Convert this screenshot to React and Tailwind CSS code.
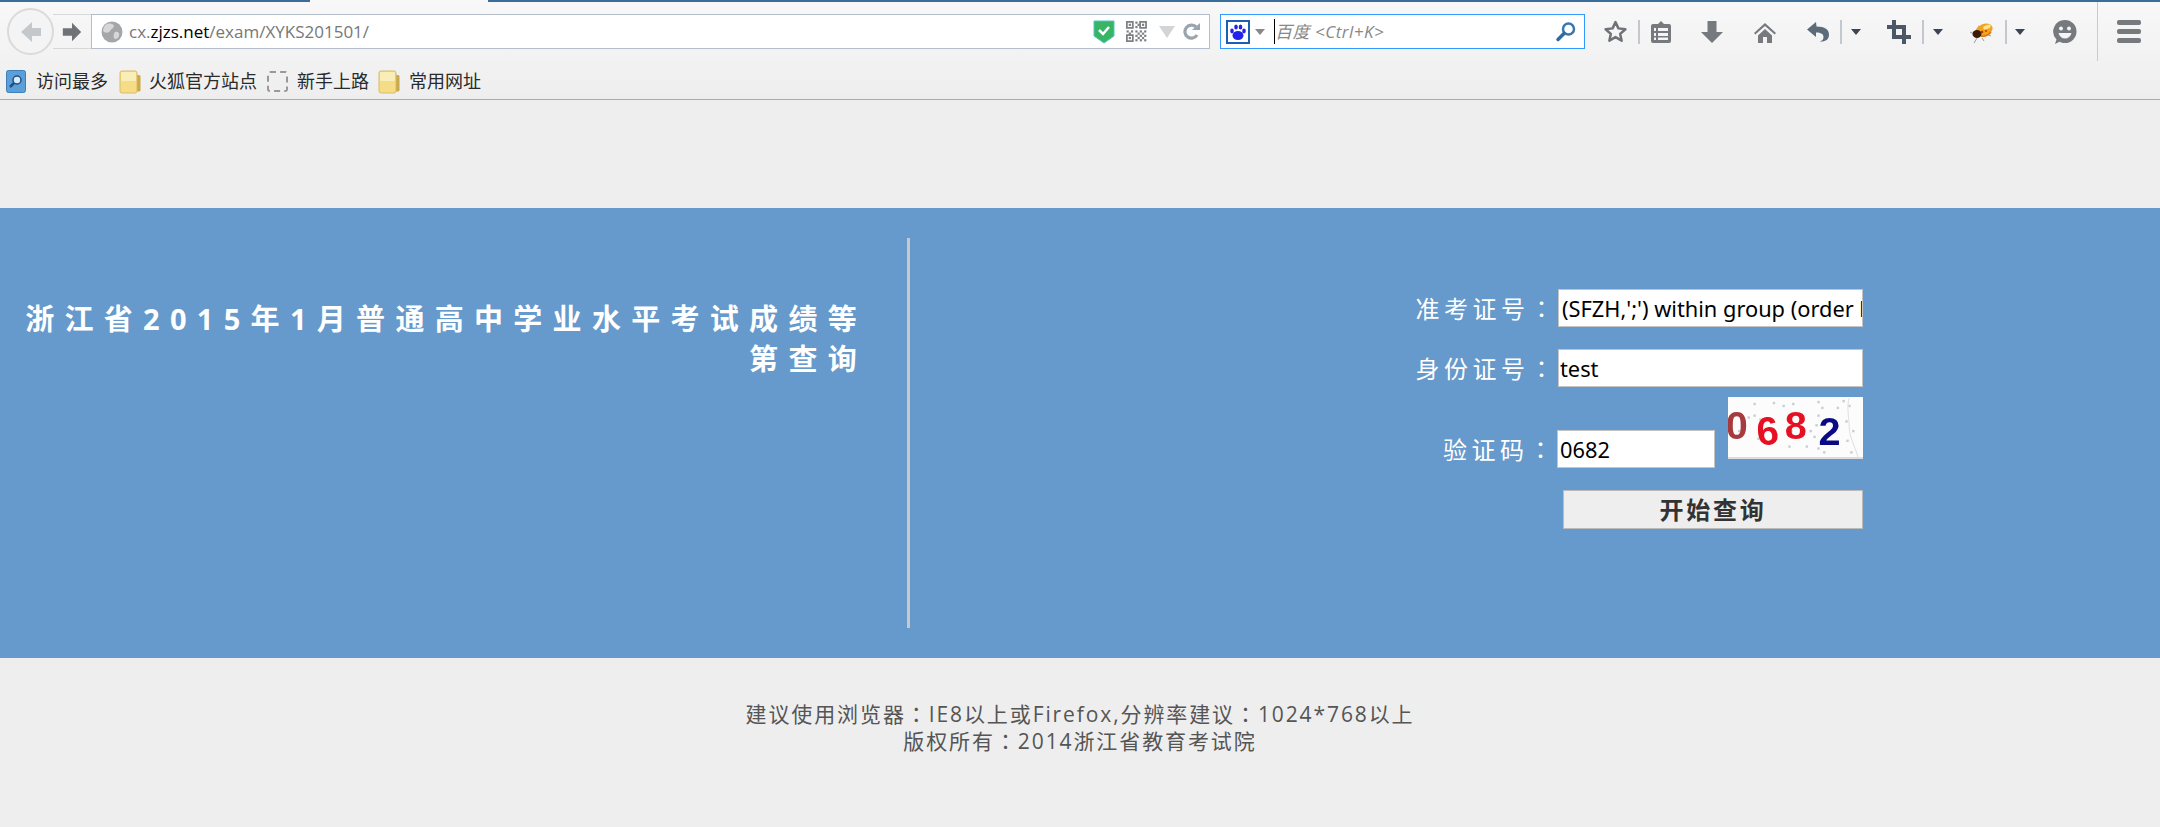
const cjk = 'font-["Open_Sans","Noto_Sans_CJK_SC",sans-serif]';

function Colon() {
  return <span className='font-["Noto_Sans_CJK_TC",sans-serif]'>：</span>;
}

function Drop({ color = "#3b4654", className = "" }) {
  return (
    <svg width="12" height="8" viewBox="0 0 12 8" className={className}>
      <path d="M1 1h10L6 7z" fill={color} />
    </svg>
  );
}

function Sep() {
  return <div className="w-[2px] h-[24px] bg-[#c3c8cf]" />;
}

function Folder() {
  return (
    <svg width="22" height="24" viewBox="0 0 22 24">
      <path d="M18 5h2a1.5 1.5 0 0 1 1.500 1.500V20a1.500 1.500 0 0 1-1.500 1.500h-2z" fill="#c9a94a" />
      <rect x="1" y="1" width="17" height="22" rx="2" fill="#f5dc87" stroke="#d8bd62" />
      <rect x="2" y="2" width="15" height="9" rx="1" fill="#faeeb8" />
    </svg>
  );
}

function Bookmark({ icon, label, className = "" }) {
  return (
    <div className={`flex items-center ${className}`}>
      {icon}
      <span className="text-[18px] text-[#2a2a2a]">{label}</span>
    </div>
  );
}

function Qr() {
  const cells = [[9,1],[11,3],[9,5],[1,9],[3,11],[5,9],[9,9],[11,11],[13,9],[15,11],[9,13],[13,13],[17,13],[11,15],[15,15],[9,17],[13,17],[17,17],[17,9]];
  const finder = [[0,0],[12,0],[0,12]];
  return (
    <svg width="22" height="22" viewBox="0 0 20 20">
      {finder.map(([x, y]) => (
        <path key={`${x}${y}`} fillRule="evenodd" fill="#7d8084" d={`M${x} ${y}h7v7h-7zM${x + 1.6} ${y + 1.6}v3.800h3.800v-3.800z`} />
      ))}
      {finder.map(([x, y]) => (
        <rect key={`c${x}${y}`} x={x + 2.5} y={y + 2.5} width="2" height="2" fill="#7d8084" />
      ))}
      {cells.map(([x, y]) => (
        <rect key={`${x}-${y}`} x={x - 0.5} y={y - 0.5} width="2" height="2" fill="#7d8084" />
      ))}
    </svg>
  );
}

function Bug() {
  return (
    <svg width="26" height="24" viewBox="0 0 26 24">
      <g stroke="#777" strokeWidth="0.700" fill="none">
        <path d="M7 15 1 12M8 18l-3 5M13 18l2 3M17 14l5 2M12 8 9 6" />
      </g>
      <ellipse cx="15" cy="10" rx="9" ry="6" fill="#f3a21f" transform="rotate(-22 15 10)" />
      <ellipse cx="18" cy="7" rx="4" ry="2" fill="#fbe28a" transform="rotate(-22 18 7)" />
      <ellipse cx="8" cy="14" rx="4.500" ry="4" fill="#3a1c08" />
      <circle cx="13" cy="12" r="1.300" fill="#a33c08" />
      <circle cx="17" cy="11" r="1.100" fill="#b84a08" />
      <path d="M12 16q6 1 10-4" stroke="#d9700f" strokeWidth="1.500" fill="none" />
    </svg>
  );
}

function Captcha() {
  const dots = [[24,6],[44,5],[24,18],[18,20],[30,22],[8,34],[54,8],[64,6],[90,4],[110,10],[116,3],[122,8],[119,24],[90,18],[88,28],[62,34],[82,34],[86,40],[78,50],[90,52],[96,56],[126,34],[120,44],[124,56],[28,42],[60,50],[94,10]];
  return (
    <svg width="135" height="62" viewBox="0 0 135 62" className="block shrink-0 bg-[#fcfcfc] border-b-2 border-[#dcdcdc] blur-[0.4px]">
      {dots.map(([x, y]) => (
        <rect key={`${x}-${y}`} x={x} y={y} width="2.500" height="2.500" fill="#c9cfd0" />
      ))}
      <path d="M123 1c-3 8 0 22 0 30 0 10 6 20 9 31" stroke="#ddd" strokeWidth="1" fill="none" />
      <g fontFamily="'Liberation Sans',sans-serif" fontWeight="700" fontSize="41" textAnchor="middle">
        <text x="9" y="43" fill="#a53a3f">0</text>
        <text x="41" y="49" fill="#e51021" transform="rotate(-6 41 35)">6</text>
        <text x="70" y="43" fill="#e51021">8</text>
        <text x="105" y="50" fill="#0a0a86">2</text>
      </g>
    </svg>
  );
}

function Field({ value, className = "" }) {
  return (
    <input
      readOnly
      value={value}
      className={`h-[38px] bg-white border border-[#c4c4c4] text-black text-[21.800px] outline-none tracking-normal font-["Noto_Sans",sans-serif] ${className}`}
    />
  );
}

export default function App() {
  return (
    <div className={`min-h-[827px] bg-[#eeeeee] ${cjk}`}>
      {/* browser chrome */}
      <header className="h-[100px] border-b border-[#aaaaaa] bg-gradient-to-b from-[#f8f8f8] to-[#eeeeee]">
        <div className="h-[2px] flex">
          <div className="w-[310px] bg-[#3a6d99]" />
          <div className="w-[178px] bg-[#f8f8f8]" />
          <div className="flex-1 bg-[#3a6d99]" />
        </div>
        <div className="h-[59px] flex items-center relative">
          <div className="ml-[7px] w-[47px] h-[47px] rounded-full border-2 border-[#dadada] bg-[#f4f4f4] flex items-center justify-center z-10">
            <svg width="24" height="24" viewBox="0 0 24 24"><path d="M22 8h-9V2L2 12l11 10v-6h9z" fill="#c5c8ca" /></svg>
          </div>
          <div className="w-[38px] h-[35px] -ml-px border-y border-[#d8d8d8] flex items-center justify-center">
            <svg width="22" height="22" viewBox="0 0 24 24"><path d="M2 8h10V2l10 10-10 10v-6H2z" fill="#6f7377" /></svg>
          </div>
          <div className="w-[1119px] h-[35px] bg-white border border-[#b4bdca] flex items-center text-[17px] font-['Open_Sans',sans-serif]">
            <svg width="22" height="22" viewBox="0 0 22 22" className="ml-[9px] mr-[6px]">
              <circle cx="11" cy="11" r="10.500" fill="#a4a6a8" />
              <path d="M6 3c3-1 7 0 7 2s-3 3-4 5-4 2-6 1 0-7 3-8zM14 11c3-1 5 1 4 4s-4 4-5 2 0-5 1-6z" fill="#d6d7d8" />
            </svg>
            <span className="text-[#777]">cx.</span>
            <span className="text-black">zjzs.net</span>
            <span className="text-[#777]">/exam/XYKS201501/</span>
            <div className="ml-auto flex items-center">
              <svg width="22" height="24" viewBox="0 0 22 24">
                <path d="M1 1h20v15l-10 7L1 16z" fill="#37b565" stroke="#55c3c8" />
                <path d="m6 10 4 4 6-7" stroke="#fff" strokeWidth="2.500" fill="none" />
              </svg>
              <div className="ml-[11px]"><Qr /></div>
              <svg width="16" height="12" viewBox="0 0 16 12" className="ml-[11px]"><path d="M0 0h16L8 12z" fill="#d2d5d8" /></svg>
              <svg width="18" height="18" viewBox="0 0 18 18" className="ml-[8px] mr-[8px]">
                <path d="M14 12a6.500 6.500 0 1 1-1-8" stroke="#9ba4ad" strokeWidth="3.200" fill="none" />
                <path d="M9 7h8V0z" fill="#9ba4ad" />
              </svg>
            </div>
          </div>
          <div className="w-[365px] h-[35px] ml-[10px] bg-white border border-[#3399ff] flex items-center">
            <div className="ml-[5px] w-[24px] h-[24px] border-2 border-[#1a5fb0] bg-white flex items-center justify-center">
              <svg width="18" height="18" viewBox="0 0 18 18" fill="#2222e8">
                <ellipse cx="9" cy="12.500" rx="5.500" ry="4.500" />
                <ellipse cx="3" cy="8" rx="1.800" ry="2.400" />
                <ellipse cx="7" cy="4" rx="1.800" ry="2.600" />
                <ellipse cx="11.500" cy="4" rx="1.800" ry="2.600" />
                <ellipse cx="15" cy="8" rx="1.800" ry="2.400" />
              </svg>
            </div>
            <Drop color="#888" className="ml-[4px]" />
            <div className="ml-[8px] w-[1px] h-[25px] bg-black" />
            <span className="italic text-[#888] text-[17px] tracking-[0.500px]">百度 &lt;Ctrl+K&gt;</span>
            <svg width="22" height="22" viewBox="0 0 22 22" className="ml-auto mr-[7px]">
              <circle cx="13.500" cy="8" r="5.500" stroke="#3a76ad" strokeWidth="2.500" fill="none" />
              <path d="M9 12.500 3 18.500" stroke="#2e6ba0" strokeWidth="3.500" strokeLinecap="round" />
            </svg>
          </div>
          {/* toolbar icons */}
          <div className="flex-1 flex items-center">
            <div className="w-[53px] flex justify-center pl-[7px]">
              <svg width="25" height="25" viewBox="0 0 24 24"><path d="m12 3 2.800 6 6.700.8-5 4.500 1.400 6.500-5.900-3.400-5.900 3.400 1.400-6.500-5-4.500 6.700-.8z" fill="none" stroke="#6f7377" strokeWidth="2.400" strokeLinejoin="round" /></svg>
            </div>
            <Sep />
            <div className="w-[42px] flex justify-center">
              <svg width="22" height="24" viewBox="0 0 22 24">
                <path fillRule="evenodd" fill="#76797d" d="M3 4h5l3-3 3 3h5a2 2 0 0 1 2 2v15a2 2 0 0 1-2 2H3a2 2 0 0 1-2-2V6a2 2 0 0 1 2-2zm1 4v3h2V8zm4 0v3h10V8zm-4 5v3h2v-3zm4 0v3h10v-3zm-4 4.500V20h2v-2.500zm4 0V20h10v-2.500z" />
              </svg>
            </div>
            <div className="w-[60px] flex justify-center">
              <svg width="24" height="24" viewBox="0 0 24 24"><path d="M7.500 1h9v11H23L12 23 1 12h6.500z" fill="#76797d" /></svg>
            </div>
            <div className="w-[46px] flex justify-center">
              <svg width="24" height="24" viewBox="0 0 24 24" fill="#76797d"><path d="M12 3 1 13l1.300 1.500L12 6l9.700 8.500L23 13z" /><path d="M5 15.500 12 9l7 6.500V23h-5v-6h-4v6H5z" /></svg>
            </div>
            <div className="w-[52px] flex justify-center pl-[7px]">
              <svg width="24" height="24" viewBox="0 0 24 24"><path d="M10 2 1 9.500l9 7.500v-4.500c5 0 7.500 1.500 7.500 4.500s-2 4-4 4.500h2c4 0 7.500-2 7.500-7s-4-8-12.500-8z" fill="#5d6a78" /></svg>
            </div>
            <Sep />
            <div className="w-[28px] flex justify-center"><Drop /></div>
            <div className="w-[52px] flex justify-center pl-[6px]">
              <svg width="24" height="24" viewBox="0 0 24 24"><path d="M5 0h4v5h10v10h5v4h-5v5h-4v-5H5V9H0V5h5zm4 9v6h6V9z" fill="#4c5866" fillRule="evenodd" /></svg>
            </div>
            <Sep />
            <div className="w-[28px] flex justify-center"><Drop /></div>
            <div className="w-[53px] flex justify-center pl-[7px]"><Bug /></div>
            <Sep />
            <div className="w-[26px] flex justify-center"><Drop /></div>
            <div className="w-[64px] flex justify-center">
              <svg width="26" height="26" viewBox="0 0 26 26">
                <path fillRule="evenodd" fill="#76797d" d="M13 1a11.500 11.500 0 0 1 0 23c-2 0-4-.5-5.500-1.300L3 25l1.500-4.500A11.500 11.500 0 0 1 13 1zM9 7.500a2 2 0 1 0 0 4 2 2 0 0 0 0-4zm8 0a2 2 0 1 0 0 4 2 2 0 0 0 0-4zM6.500 14c.8 3.500 3.300 5.500 6.500 5.500s5.700-2 6.500-5.500z" />
              </svg>
            </div>
            <div className="w-[1px] h-[59px] bg-[#c8ccd0]" />
            <div className="flex-1 flex justify-center">
              <div className="w-[24px] flex flex-col gap-[4px]">
                <div className="h-[5px] rounded-[2px] bg-[#76797d]" />
                <div className="h-[5px] rounded-[2px] bg-[#76797d]" />
                <div className="h-[5px] rounded-[2px] bg-[#76797d]" />
              </div>
            </div>
          </div>
        </div>
        <div className="h-[38px] pt-[3px] flex items-center pl-[6px]">
          <Bookmark
            label="访问最多"
            icon={
              <svg width="20" height="23" viewBox="0 0 20 23" className="mr-[10px]">
                <rect x="0.500" y="0.500" width="19" height="22" rx="2" fill="#5c9fd8" stroke="#3d7fb8" />
                <circle cx="11" cy="10" r="4" fill="#d7ecfb" stroke="#1c4f86" strokeWidth="1.500" />
                <path d="M8 13 4 17" stroke="#1c4f86" strokeWidth="2.500" />
              </svg>
            }
          />
          <Bookmark className="ml-[11px]" label="火狐官方站点" icon={<div className="mr-[8px]"><Folder /></div>} />
          <Bookmark
            className="ml-[10px]"
            label="新手上路"
            icon={<div className="w-[21px] h-[21px] mr-[9px] border-2 border-dashed border-[#999] rounded-[3px]" />}
          />
          <Bookmark className="ml-[9px]" label="常用网址" icon={<div className="mr-[9px]"><Folder /></div>} />
        </div>
      </header>

      <div className="h-[108px]" />

      {/* band */}
      <section className="h-[450px] bg-[#6699cc] flex">
        <div className="w-[907px] pt-[91px] pl-[20px] pr-[40px] text-right">
          <h1 className="text-[29px] leading-[40px] font-bold text-white tracking-[10.300px]">
            浙江省2015年1月普通高中学业水平考试成绩等第查询
          </h1>
        </div>
        <div className="w-[3px] my-[30px] bg-[#c8c8c8]" />
        <form className="flex-1 pt-[81px] pr-[297px] flex flex-col items-end text-white text-[24px] tracking-[4.500px]">
          <div className="flex items-center">
            <label>准考证号<Colon /></label>
            <Field value="(SFZH,';') within group (order by" className="w-[305px] pl-[3px]" />
          </div>
          <div className="flex items-center mt-[22px]">
            <label>身份证号<Colon /></label>
            <Field value="test" className="w-[305px] pl-[1px]" />
          </div>
          <div className="flex items-end h-[71px] mt-[10px]">
            <label>验证码<Colon /></label>
            <Field value="0682" className="w-[158px] h-[36px] pl-[2px] mr-[13px] border-[#aaaaaa]" />
            <div className="self-start"><Captcha /></div>
          </div>
          <button type="button" className="mt-[22px] w-[300px] h-[39px] bg-[#eeeeee] border border-[#bbbbbb] text-[#333] font-bold text-[24px] tracking-[2.700px]">
            开始查询
          </button>
        </form>
      </section>

      <footer className="pt-[42px] text-center text-[#555] text-[21px] leading-[26px] tracking-[1.900px]">
        <p>建议使用浏览器<Colon />IE8以上或Firefox,分辨率建议<Colon />1024*768以上</p>
        <p>版权所有<Colon />2014浙江省教育考试院</p>
      </footer>
    </div>
  );
}
